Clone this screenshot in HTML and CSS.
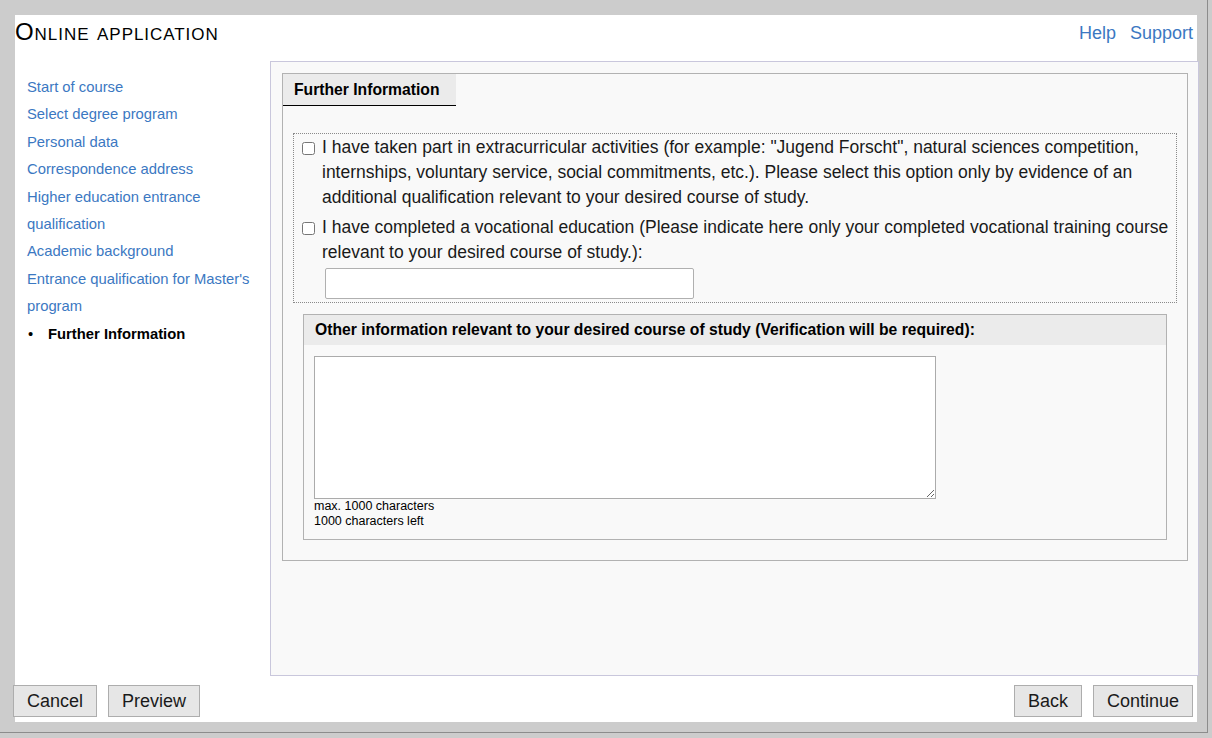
FILE: index.html
```html
<!DOCTYPE html>
<html lang="en">
<head>
<meta charset="utf-8">
<title>Online application</title>
<link rel="stylesheet" href="styles.css">
</head>
<body>
<div class="frame">
  <div class="page">
    <header class="top">
      <h1 class="title">Online application</h1>
      <nav class="toplinks">
        <a href="#">Help</a>
        <a href="#">Support</a>
      </nav>
    </header>
    <div class="body">
      <nav class="side">
        <ul class="steps">
          <li><a href="#">Start of course</a></li>
          <li><a href="#">Select degree program</a></li>
          <li><a href="#">Personal data</a></li>
          <li><a href="#">Correspondence address</a></li>
          <li><a href="#">Higher education entrance qualification</a></li>
          <li><a href="#">Academic background</a></li>
          <li><a href="#">Entrance qualification for Master's program</a></li>
          <li class="current">Further Information</li>
        </ul>
      </nav>
      <main class="panel">
        <section class="card">
          <div class="tabrow"><div class="tab">Further Information</div></div>
          <div class="options">
            <label class="opt">
              <input type="checkbox" class="chk">
              <span>I have taken part in extracurricular activities (for example: "Jugend Forscht", natural sciences competition, internships, voluntary service, social commitments, etc.). Please select this option only by evidence of an additional qualification relevant to your desired course of study.</span>
            </label>
            <div class="opt">
              <input type="checkbox" class="chk" id="voc">
              <div class="opttext">
                <label for="voc">I have completed a vocational education (Please indicate here only your completed vocational training course relevant to your desired course of study.):</label>
                <input type="text" class="txt">
              </div>
            </div>
          </div>
          <div class="other">
            <div class="otherhead">Other information relevant to your desired course of study (Verification will be required):</div>
            <div class="otherbody">
              <textarea class="area"></textarea>
              <div class="hint">max. 1000 characters</div>
              <div class="hint">1000 characters left</div>
            </div>
          </div>
        </section>
      </main>
    </div>
    <footer class="actions">
      <div class="group">
        <button class="btn">Cancel</button>
        <button class="btn">Preview</button>
      </div>
      <div class="group">
        <button class="btn">Back</button>
        <button class="btn">Continue</button>
      </div>
    </footer>
  </div>
</div>
</body>
</html>
```
FILE: styles.css
```css
* { box-sizing: border-box; }

html, body {
  margin: 0;
  padding: 0;
  background: #cccccc;
  font-family: "Liberation Sans", Arial, sans-serif;
  color: #1a1a1a;
}

.frame {
  width: 1208px;
  height: 733px;
  padding: 15px 0 0 15px;
  border-right: 1px solid #8c8c8c;
  border-bottom: 1px solid #8c8c8c;
}

.page {
  width: 1182px;
  height: 707px;
  background: #ffffff;
  display: flex;
  flex-direction: column;
}

.top {
  height: 46px;
  display: flex;
  justify-content: space-between;
  align-items: flex-start;
}

.title {
  margin: 0;
  padding-top: 3px;
  font-size: 24px;
  line-height: 27px;
  font-weight: normal;
  font-variant: small-caps;
  letter-spacing: 0.95px;
  color: #000;
}

.toplinks {
  display: flex;
  gap: 14px;
  padding-top: 6px;
  padding-right: 4px;
  font-size: 18px;
  line-height: 24px;
}

.toplinks a,
.steps a {
  color: #3b78c2;
  text-decoration: none;
}

.body {
  display: flex;
  height: 615px;
}

.side {
  width: 255px;
  flex: none;
  padding: 13px 12px 0 12px;
}

.steps {
  list-style: none;
  margin: 0;
  padding: 0;
  font-size: 14.8px;
  line-height: 27.4px;
}

.steps .current {
  font-weight: bold;
  color: #000;
  display: flex;
}

.steps .current::before {
  content: "\2022";
  font-weight: normal;
  width: 20px;
  padding-left: 1px;
}

.panel {
  width: 929px;
  flex: none;
  margin-right: -2px;
  border: 1px solid #c9c7dc;
  background: #f9f9f9;
  padding: 11px 10px 0 11px;
}

.card {
  border: 1px solid #b2b2b2;
  padding: 0 0 20px 0;
}

.tabrow {
  display: flex;
}

.tab {
  width: 173px;
  height: 32px;
  background: #ebebeb;
  border-bottom: 1px solid #000;
  padding: 6px 0 0 11px;
  font-size: 15.7px;
  font-weight: bold;
  line-height: 20px;
  color: #000;
}

.options {
  margin: 27px 10px 0 10px;
  border: 1px dotted #8a8a8a;
  padding: 1px 0 3px 8px;
  font-size: 17.5px;
  line-height: 25px;
}

.opt {
  display: flex;
  align-items: flex-start;
}

.opt + .opt {
  margin-top: 5px;
}

.chk {
  width: 13px;
  height: 13px;
  margin: 7px 7px 0 0;
  flex: none;
}

.opttext {
  display: flex;
  flex-direction: column;
  align-items: flex-start;
}

.txt {
  width: 369px;
  height: 31px;
  margin: 3px 0 0 3px;
  border: 1px solid #b0b0b0;
  border-radius: 2px;
  background: #fff;
}

.other {
  margin: 11px 20px 0 20px;
  border: 1px solid #b2b2b2;
}

.otherhead {
  height: 30px;
  background: #ebebeb;
  padding: 5px 0 0 11px;
  font-size: 15.7px;
  font-weight: bold;
  line-height: 20px;
  color: #000;
}

.otherbody {
  padding: 11px 10px 10px 10px;
}

.area {
  display: block;
  width: 622px;
  height: 143px;
  margin: 0;
  border: 1px solid #ababab;
  background: #fff;
  resize: both;
}

.hint {
  font-size: 12.5px;
  line-height: 15px;
  color: #000;
}

.actions {
  display: flex;
  justify-content: space-between;
  margin: 9px 4px 0 -2px;
}

.group {
  display: flex;
  gap: 11px;
}

.btn {
  height: 32px;
  padding: 0 13px;
  background: #e6e6e6;
  border: 1px solid #adadad;
  border-radius: 0;
  font-family: "Liberation Sans", Arial, sans-serif;
  font-size: 18px;
  color: #1a1a1a;
}
```
